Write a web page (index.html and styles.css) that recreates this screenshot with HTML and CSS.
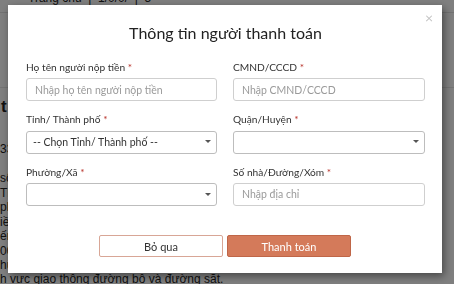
FILE: index.html
```html
<!DOCTYPE html>
<html lang="vi">
	<head>
		<meta charset="UTF-8" />
		<meta name="viewport" content="width=device-width, initial-scale=1.0" />
		<title>Thanh toán</title>
		<link rel="stylesheet" href="styles.css">
	</head>

	<body>
		<!-- trang phía sau -->
		<div class="page">
			<div class="topbar"><span>Trang chủ &nbsp;|&nbsp; 1/0/0/ &nbsp;|&nbsp; 5</span></div>
			<div class="band"></div>
			<h2 class="pageTitle">t</h2>
			<p class="pageNum">33</p>
			<div class="pageText">
				<p>sổ</p>
				<p>TK</p>
				<p>phí</p>
				<p>iền</p>
				<p>ến</p>
				<p>000</p>
				<p>hữu</p>
				<p class="lastLine">h vực giao thông đường bộ và đường sắt.</p>
			</div>
		</div>

		<!-- hộp thoại -->
		<div class="overlay">
			<div class="modal">
				<span class="closeBtn">&times;</span>
				<h1 class="modalTitle">Thông tin người thanh toán</h1>

				<form class="payForm" action="" method="get">
					<div class="field">
						<label for="hoten">Họ tên người nộp tiền <b>*</b></label>
						<input type="text" id="hoten" placeholder="Nhập họ tên người nộp tiền" />
					</div>
					<div class="field">
						<label for="cmnd">CMND/CCCD <b>*</b></label>
						<input type="text" id="cmnd" placeholder="Nhập CMND/CCCD" />
					</div>
					<div class="field">
						<label for="tinh">Tỉnh/ Thành phố <b>*</b></label>
						<div class="selectBox">
							<select id="tinh">
								<option>-- Chọn Tỉnh/ Thành phố --</option>
							</select>
						</div>
					</div>
					<div class="field">
						<label for="quan">Quận/Huyện <b>*</b></label>
						<div class="selectBox">
							<select id="quan"><option></option></select>
						</div>
					</div>
					<div class="field">
						<label for="phuong">Phường/Xã <b>*</b></label>
						<div class="selectBox">
							<select id="phuong"><option></option></select>
						</div>
					</div>
					<div class="field">
						<label for="diachi">Số nhà/Đường/Xóm <b>*</b></label>
						<input type="text" id="diachi" placeholder="Nhập địa chỉ" />
					</div>

					<div class="actions">
						<button type="button" class="btn btnCancel">Bỏ qua</button>
						<button type="submit" class="btn btnPay">Thanh toán</button>
					</div>
				</form>
			</div>
		</div>
	</body>
</html>
```

FILE: styles.css
```css
* {
	margin: 0;
	padding: 0;
	box-sizing: border-box;
}

html, body {
	width: 100%;
	height: 100%;
	overflow: hidden;
}

body {
	font-family: Lato, "Open Sans", Arial, sans-serif;
	background: #fff;
	color: #222;
}

/* trang phía sau */
.page {
	font-family: "Liberation Sans", Arial, sans-serif;
}
.topbar {
	height: 13px;
	border-bottom: 1px solid #e2e2e2;
	font-size: 12px;
	line-height: 12px;
	padding-left: 28px;
	overflow: hidden;
}
.topbar span {
	display: block;
	margin-top: -8px;
}
.band {
	height: 75px;
	border-bottom: 1px solid #e6e6e6;
}
.pageTitle {
	font-size: 17px;
	line-height: 20px;
	margin-top: 9px;
	padding-left: 1px;
}
.pageNum {
	font-size: 12px;
	line-height: 14px;
	margin-top: 25px;
}
.pageText {
	margin-top: 15px;
	font-size: 12px;
	line-height: 14.5px;
}
.pageText .lastLine {
	margin-top: -1px;
}

/* hộp thoại */
.overlay {
	position: fixed;
	inset: 0;
	background-color: rgba(0, 0, 0, 0.5);
}
.modal {
	position: relative;
	width: 434px;
	height: 268px;
	margin: 5px 0 0 8px;
	padding: 17px 17px 0 18px;
	background: #fff;
	box-shadow: 2px 3px 8px rgba(0, 0, 0, 0.45);
}
.closeBtn {
	position: absolute;
	top: 5px;
	right: 9px;
	font-size: 14px;
	line-height: 16px;
	color: #c4c4c4;
}
.modalTitle {
	font-size: 16px;
	line-height: 22px;
	font-weight: 400;
	text-align: center;
	color: #222;
}

.payForm {
	display: grid;
	grid-template-columns: 191px 192px;
	column-gap: 16px;
	row-gap: 11px;
	margin-top: 16px;
}
.field {
	display: flex;
	flex-direction: column;
}
.field label {
	font-size: 10.2px;
	line-height: 14px;
	margin-bottom: 4px;
	color: #333;
}
.field label b {
	color: #b8322a;
	font-weight: 400;
}
.field input,
.field select {
	width: 100%;
	height: 23px;
	border: 1px solid #cfcfcf;
	border-radius: 3px;
	padding: 0 8px;
	font-family: inherit;
	font-size: 10.5px;
	color: #333;
	background: #fff;
	outline: none;
}
.field input::placeholder {
	color: #9a9a9a;
}
.field select {
	appearance: none;
	-webkit-appearance: none;
	padding: 0 6px;
	border-color: #bdbdbd;
}
.selectBox {
	position: relative;
}
.selectBox::after {
	content: "";
	position: absolute;
	right: 6px;
	top: 10px;
	border-left: 3px solid transparent;
	border-right: 3px solid transparent;
	border-top: 3px solid #555;
}

.actions {
	grid-column: 1 / 3;
	display: flex;
	justify-content: center;
	gap: 4px;
	margin-top: 18px;
	padding-right: 1px;
}
.btn {
	width: 124px;
	height: 22px;
	border-radius: 2px;
	font-family: inherit;
	font-size: 11px;
	cursor: pointer;
}
.btnCancel {
	background: #fff;
	border: 1px solid #d8a696;
	color: #333;
}
.btnPay {
	background: #d47a5a;
	border: 1px solid #bf6648;
	color: #fff;
}
```
